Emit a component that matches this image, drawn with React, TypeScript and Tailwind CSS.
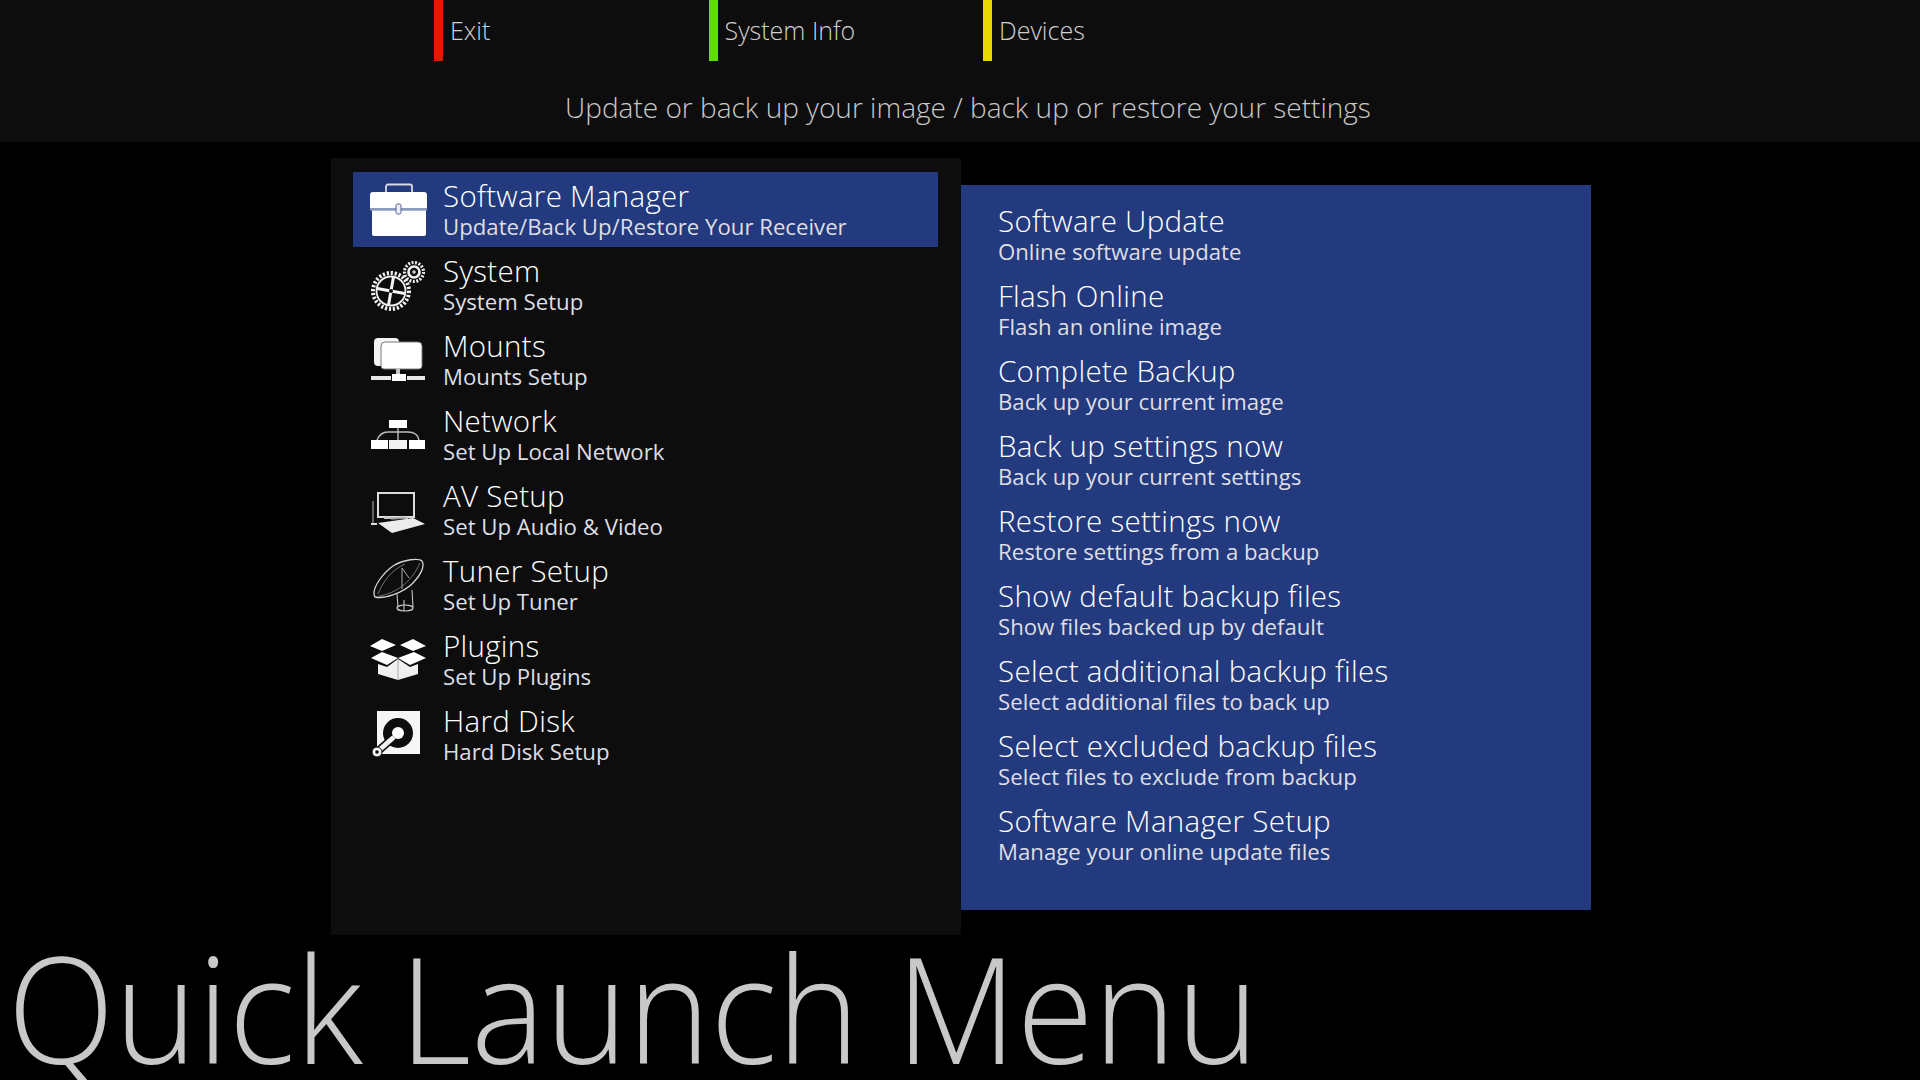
import type { ReactNode } from 'react';

const Briefcase = (
  <>
    <path d="M17 11V5.500a2 2 0 0 1 2-2h22a2 2 0 0 1 2 2V11" fill="none" stroke="#d8dbe6" strokeWidth="1.800" />
    <path d="M1 14a3 3 0 0 1 3-3h51a3 3 0 0 1 3 3v13H1z" fill="#fff" />
    <rect x="1" y="27" width="57" height="2.500" fill="#8f9bbd" />
    <path d="M3 29.500h54V53a2 2 0 0 1-2 2H5a2 2 0 0 1-2-2z" fill="#fff" />
    <rect x="27" y="23" width="5" height="10" rx="1.500" fill="#eceef5" stroke="#55628f" strokeWidth="1" />
  </>
);

const Gears = (
  <>
    <circle cx="22" cy="35" r="18" fill="none" stroke="#f2f2f2" strokeWidth="4" strokeDasharray="2.200 1.800" />
    <circle cx="22" cy="35" r="14.500" fill="none" stroke="#f2f2f2" strokeWidth="1.800" />
    <g transform="rotate(10 22 35)" stroke="#f4f4f4" strokeWidth="3">
      <path d="M22 21v28M8 35h28" />
    </g>
    <circle cx="22" cy="35" r="2" fill="#0d0d0d" />
    <circle cx="45" cy="16" r="9.500" fill="none" stroke="#ececec" strokeWidth="3.200" strokeDasharray="2 1.500" />
    <circle cx="45" cy="16" r="5.500" fill="none" stroke="#f4f4f4" strokeWidth="2.600" />
    <circle cx="45" cy="16" r="1.800" fill="#d0d0d0" />
  </>
);

const Mounts = (
  <>
    <path d="M5 11a4 4 0 0 1 4-4h17a4 4 0 0 1 4 4v24H9a4 4 0 0 1-4-4z" fill="#f4f4f4" />
    <path d="M12 15a4 4 0 0 1 4-4h33a4 4 0 0 1 4 4v20a3 3 0 0 1-3 3H15a3 3 0 0 1-3-3z" fill="#fff" stroke="#7a7a7a" strokeWidth="1" />
    <rect x="27" y="38" width="4" height="6" fill="#c8c8c8" />
    <rect x="23" y="43" width="14" height="7" fill="#fff" />
    <rect x="2" y="45" width="20" height="4" fill="#e8e8e8" />
    <rect x="38" y="45" width="18" height="4" fill="#e8e8e8" />
  </>
);

const Network = (
  <>
    <rect x="20" y="14" width="18" height="8" fill="#fff" />
    <rect x="2" y="34" width="17" height="9" fill="#fff" />
    <rect x="20" y="34" width="18" height="9" fill="#f2f2f2" />
    <rect x="40" y="34" width="16" height="9" fill="#fff" />
    <path d="M29 22v12M8 34c2-5 6-8 11-8h20c6 0 10 3 11 8" fill="none" stroke="#bdbdbd" strokeWidth="1.400" />
  </>
);

const Laptop = (
  <>
    <rect x="9" y="12" width="36" height="24" fill="none" stroke="#dcdcdc" strokeWidth="2" />
    <rect x="15" y="36" width="24" height="2" fill="#c4c4c4" />
    <path d="M9 42l35-5 12 6-33 9z" fill="#ececec" />
    <path d="M22 38l14-1" stroke="#9a9a9a" strokeWidth="1.500" />
    <path d="M4 20v22" stroke="#b8b8b8" strokeWidth="1" />
    <rect x="2" y="42" width="6" height="2" fill="#e0e0e0" />
  </>
);

const Dish = (
  <g fill="none" stroke="#d4d4d4">
    <path d="M6 41C14 43 33 38 44 27 52 19 56 10 53 5 50 2 35 3 24 10 14 17 5 30 5 37c0 2 0 3 1 4z" strokeWidth="1.300" />
    <path d="M9 38C14 26 22 14 36 8M10 40C24 38 42 28 51 7" strokeWidth="0.700" stroke="#9c9c9c" />
    <path d="M33 12v21M33 12l7 10" strokeWidth="1" stroke="#a8a8a8" />
    <path d="M28 38l1 13M43 34l1 17M35 44v11" strokeWidth="1" />
    <ellipse cx="36" cy="52" rx="8" ry="3" strokeWidth="1.200" />
  </g>
);

const Box = (
  <>
    <path d="M1 15l12-7 14 6-14 6zM31 14l13-6 13 7-13 5z" fill="#fff" />
    <path d="M2 27l11-6 16 6-11 7zM29 27l16-6 12 6-16 7z" fill="#fff" />
    <path d="M9 33l9 3 11-8 12 8 8-3v10l-20 6-20-6z" fill="#f0f0f0" />
    <path d="M29 28v21" stroke="#9a9a9a" strokeWidth="0.800" />
  </>
);

const Disk = (
  <>
    <rect x="8" y="5" width="43" height="43" fill="#f6f6f6" />
    <circle cx="29" cy="27" r="15" fill="#0d0d0d" />
    <circle cx="29" cy="27" r="6" fill="#fff" />
    <path d="M25 31L8 46" stroke="#0d0d0d" strokeWidth="8" />
    <path d="M25 31L8 46" stroke="#f4f4f4" strokeWidth="5" />
    <circle cx="8" cy="46" r="5" fill="#f4f4f4" stroke="#0d0d0d" strokeWidth="1" />
    <circle cx="8" cy="46" r="1.800" fill="#0d0d0d" />
  </>
);

const menu: { title: string; sub: string; icon: ReactNode }[] = [
  { title: 'Software Manager', sub: 'Update/Back Up/Restore Your Receiver', icon: Briefcase },
  { title: 'System', sub: 'System Setup', icon: Gears },
  { title: 'Mounts', sub: 'Mounts Setup', icon: Mounts },
  { title: 'Network', sub: 'Set Up Local Network', icon: Network },
  { title: 'AV Setup', sub: 'Set Up Audio & Video', icon: Laptop },
  { title: 'Tuner Setup', sub: 'Set Up Tuner', icon: Dish },
  { title: 'Plugins', sub: 'Set Up Plugins', icon: Box },
  { title: 'Hard Disk', sub: 'Hard Disk Setup', icon: Disk },
];

const options = [
  ['Software Update', 'Online software update'],
  ['Flash Online', 'Flash an online image'],
  ['Complete Backup', 'Back up your current image'],
  ['Back up settings now', 'Back up your current settings'],
  ['Restore settings now', 'Restore settings from a backup'],
  ['Show default backup files', 'Show files backed up by default'],
  ['Select additional backup files', 'Select additional files to back up'],
  ['Select excluded backup files', 'Select files to exclude from backup'],
  ['Software Manager Setup', 'Manage your online update files'],
];

const keys = [
  { label: 'Exit', color: 'bg-[#e01b00]' },
  { label: 'System Info', color: 'bg-[#5fdc00]' },
  { label: 'Devices', color: 'bg-[#e6d800]' },
];

function RowText({ title, sub }: { title: string; sub: string }) {
  return (
    <div className="flex flex-col pt-[2px] text-white">
      <span className="text-[29.5px] leading-[34px] font-light tracking-[0.3px]">{title}</span>
      <span className="mt-[1px] text-[22.2px] leading-[26px] text-[#dedee4]">{sub}</span>
    </div>
  );
}

export default function App() {
  return (
    <div className="w-[1920px] h-[1080px] overflow-hidden bg-black font-['Open_Sans',sans-serif]">
      <header className="h-[142px] bg-[#0d0d0d] flex flex-col">
        <div className="flex pl-[434px]">
          {keys.map((k) => (
            <div key={k.label} className="w-[274.500px] flex">
              <div className={`w-[9px] h-[61px] ${k.color}`} />
              <span className="ml-[7px] pt-[12px] text-[25px] leading-[36px] font-light text-[#d0d0d0]">{k.label}</span>
            </div>
          ))}
        </div>
        <p className="pl-[16px] mt-[25px] text-center text-[28px] leading-[42px] font-light text-[#c8c8c8]">
          Update or back up your image / back up or restore your settings
        </p>
      </header>

      <main className="flex pl-[331px] pt-[16px]">
        <nav className="w-[630px] h-[777px] bg-[#0d0d0d] pt-[14px] pl-[22px] pr-[23px]">
          {menu.map((m, i) => (
            <div key={m.title} className={`h-[75px] flex items-center pl-[16px] ${i === 0 ? 'bg-[#233a7e]' : ''}`}>
              <svg viewBox="0 0 58 58" className="w-[58px] h-[58px] shrink-0 mr-[16px]">{m.icon}</svg>
              <div className="mb-[2px]">
                <RowText title={m.title} sub={m.sub} />
              </div>
            </div>
          ))}
        </nav>
        <section className="w-[630px] h-[725px] mt-[27px] bg-[#233a7e] pt-[11px] pl-[37px]">
          {options.map(([title, sub]) => (
            <div key={title} className="h-[75px] flex items-center">
              <RowText title={title} sub={sub} />
            </div>
          ))}
        </section>
      </main>

      <h1 className="mt-[2px] pl-[8px] text-[147px] leading-[140px] font-light text-[#c8c8c8] whitespace-nowrap origin-left scale-x-[0.952]">Quick Launch Menu</h1>
    </div>
  );
}
